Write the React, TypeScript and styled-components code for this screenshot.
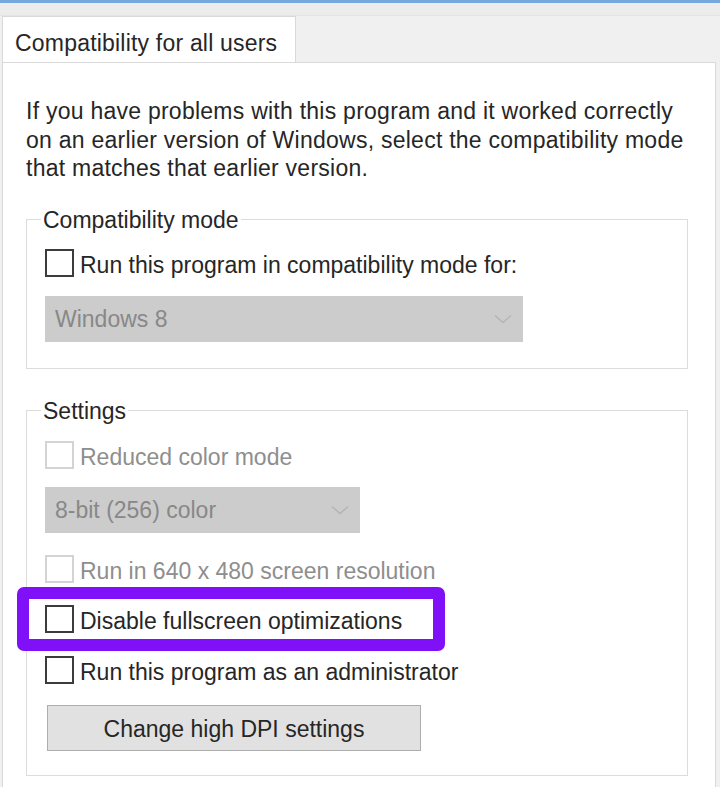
import styled, { createGlobalStyle } from 'styled-components';

const GlobalStyle = createGlobalStyle`
  html, body {
    margin: 0;
    padding: 0;
    background: #f0f0f0;
  }
  body {
    font-family: "Liberation Sans", Arial, sans-serif;
    font-size: 23px;
    color: #262626;
  }
`;

const Window = styled.div`
  width: 720px;
  height: 787px;
  display: flex;
  flex-direction: column;
  overflow: hidden;
`;

const TitleEdge = styled.div`
  height: 12px;
  border-top: 3px solid #74aade;
  border-bottom: 1px solid #f3e0d2;
  background: #ececec;
  flex-shrink: 0;
`;

const TabStrip = styled.div`
  height: 47px;
  display: flex;
  padding-left: 2px;
  flex-shrink: 0;
`;

const Tab = styled.div`
  width: 280px;
  padding: 5px 0 0 12px;
  line-height: 42px;
  letter-spacing: 0.2px;
  background: #fff;
  border: 1px solid #d9d9d9;
  border-bottom: none;
  white-space: nowrap;
`;

const Panel = styled.div`
  flex: 1;
  margin: -1px 4px 0 2px;
  padding: 34px 0 0 22px;
  background: #fff;
  border: 1px solid #d9d9d9;
  border-bottom: none;
`;

const Intro = styled.p`
  margin: 0 0 0 1px;
  max-width: 672px;
  line-height: 28.5px;
  letter-spacing: 0.25px;
`;

const Group = styled.fieldset<{ $top: number; $bottom: number }>`
  margin: ${(p) => p.$top}px 0 0 1px;
  width: 662px;
  box-sizing: border-box;
  padding: 0 0 ${(p) => p.$bottom}px 18px;
  border: 1px solid #dcdcdc;
  min-width: 0;
`;

const Legend = styled.legend`
  margin-left: -4px;
  padding: 0 2px;
  line-height: 28px;
`;

const CheckRow = styled.div<{ $top: number }>`
  display: flex;
  align-items: center;
  gap: 6px;
  height: 30px;
  margin-top: ${(p) => p.$top}px;
`;

const Box = styled.span<{ $disabled?: boolean }>`
  width: 29px;
  height: 28px;
  box-sizing: border-box;
  background: #fff;
  border: 2px solid ${(p) => (p.$disabled ? '#d4d4d4' : '#3c3c3c')};
  flex-shrink: 0;
`;

const Label = styled.span<{ $disabled?: boolean }>`
  line-height: 30px;
  padding-top: 4px;
  white-space: nowrap;
  color: ${(p) => (p.$disabled ? '#8e8e8e' : '#262626')};
`;

const Select = styled.div<{ $width: number; $top: number }>`
  width: ${(p) => p.$width}px;
  height: 46px;
  margin-top: ${(p) => p.$top}px;
  box-sizing: border-box;
  padding: 0 11px 0 10px;
  display: flex;
  align-items: center;
  justify-content: space-between;
  background: #cccccc;
  color: #888;
  line-height: 46px;
`;

const Highlight = styled.div`
  margin: 3px 0 0 -28px;
  width: 428px;
  height: 64px;
  box-sizing: border-box;
  border: 12px solid #8010f8;
  border-radius: 7px;
  padding-left: 16px;
  display: flex;
  align-items: center;
  gap: 6px;
  background: #fff;
`;

const Button = styled.div`
  margin: 20px 0 0 2px;
  width: 374px;
  height: 46px;
  box-sizing: border-box;
  background: #e1e1e1;
  border: 1px solid #adadad;
  display: flex;
  align-items: center;
  justify-content: center;
  padding-top: 3px;
  color: #262626;
`;

const Chevron = () => (
  <svg width="18" height="10" viewBox="0 0 18 10" fill="none">
    <path d="M1 1.5 L9 8.5 L17 1.5" stroke="#b4b4b4" strokeWidth="1.4" />
  </svg>
);

export default function App() {
  return (
    <>
      <GlobalStyle />
      <Window>
        <TitleEdge />
        <TabStrip>
          <Tab>Compatibility for all users</Tab>
        </TabStrip>
        <Panel>
          <Intro>
            If you have problems with this program and it worked correctly on an earlier
            version of Windows, select the compatibility mode that matches that earlier
            version.
          </Intro>

          <Group $top={23} $bottom={26}>
            <Legend>Compatibility mode</Legend>
            <CheckRow $top={14}>
              <Box />
              <Label>Run this program in compatibility mode for:</Label>
            </CheckRow>
            <Select $width={478} $top={18}>
              <span>Windows 8</span>
              <Chevron />
            </Select>
          </Group>

          <Group $top={28} $bottom={24}>
            <Legend>Settings</Legend>
            <CheckRow $top={15}>
              <Box $disabled />
              <Label $disabled>Reduced color mode</Label>
            </CheckRow>
            <Select $width={315} $top={17}>
              <span>8-bit (256) color</span>
              <Chevron />
            </Select>
            <CheckRow $top={21}>
              <Box $disabled />
              <Label $disabled>Run in 640 x 480 screen resolution</Label>
            </CheckRow>
            <Highlight>
              <Box />
              <Label>Disable fullscreen optimizations</Label>
            </Highlight>
            <CheckRow $top={4}>
              <Box />
              <Label>Run this program as an administrator</Label>
            </CheckRow>
            <Button>Change high DPI settings</Button>
          </Group>
        </Panel>
      </Window>
    </>
  );
}
